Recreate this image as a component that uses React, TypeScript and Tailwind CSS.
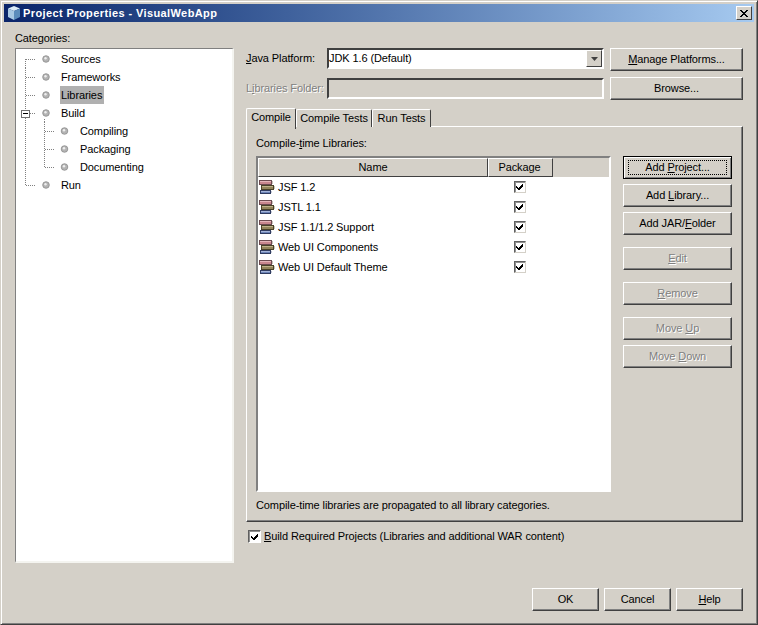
const FONT = "font-['Liberation_Sans','DejaVu_Sans',sans-serif]";

function Btn({ children, w = "w-[109px]", disabled = false, focus = false, className = "" }: { children: React.ReactNode; w?: string; disabled?: boolean; focus?: boolean; className?: string }) {
  const edge = focus
    ? "border-black shadow-[inset_1px_1px_0_#fff,inset_-1px_-1px_0_#808080]"
    : "border-t-white border-l-white border-r-[#404040] border-b-[#404040] shadow-[inset_-1px_-1px_0_#808080]";
  return (
    <div
      className={`${w} h-[23px] shrink-0 flex items-center justify-center bg-[#d4d0c8] border ${edge} ${disabled ? "text-[#808080] [text-shadow:1px_1px_0_#fff]" : "text-black"} ${className}`}
    >
      {focus ? (
        <span className="w-[99px] h-[15px] flex items-center justify-center border border-dotted border-black">{children}</span>
      ) : (
        children
      )}
    </div>
  );
}

function Row({ label, level = 0, last = false, expander = false, selected = false, firstRow = false, lastChild = false }: { label: string; level?: number; last?: boolean; expander?: boolean; selected?: boolean; firstRow?: boolean; lastChild?: boolean }) {
  return (
    <div className="flex h-[18px] items-center">
      <svg width={level ? 62 : 43} height={18} className="shrink-0" shapeRendering="crispEdges">
        <line x1="8.5" y1={firstRow ? 9 : 0} x2="8.5" y2={last ? 9 : 18} stroke="#808080" strokeDasharray="1 1" />
        {level === 0 && !expander && <line x1="9" y1="9.5" x2="19" y2="9.5" stroke="#808080" strokeDasharray="1 1" />}
        {level === 1 && (
          <>
            <line x1="27.5" y1="0" x2="27.5" y2={lastChild ? 9 : 18} stroke="#808080" strokeDasharray="1 1" />
            <line x1="28" y1="9.5" x2="37" y2="9.5" stroke="#808080" strokeDasharray="1 1" />
          </>
        )}
        {expander && (
          <>
            <line x1="13" y1="9.5" x2="19" y2="9.5" stroke="#808080" strokeDasharray="1 1" />
            <line x1="27.5" y1="15" x2="27.5" y2="18" stroke="#808080" strokeDasharray="1 1" />
            <rect x="4.5" y="6.5" width="8" height="7" fill="#fff" stroke="#707070" />
            <line x1="6" y1="9.5" x2="11" y2="9.5" stroke="#000" />
          </>
        )}
        <g shapeRendering="auto">
          <circle cx={level ? 47.5 : 29} cy="9" r="3.3" fill="#b4b4b4" stroke="#8c8c8c" strokeWidth="0.8" />
          <circle cx={level ? 47 : 28.5} cy="8.2" r="1.2" fill="#eeeeee" />
        </g>
      </svg>
      <span className={`pl-[1px] pr-[2px] h-[18px] flex items-center text-black ${selected ? "bg-[#b0b0b0]" : ""}`}>{label}</span>
    </div>
  );
}

function Books() {
  return (
    <svg width="16" height="16" viewBox="0 0 16 16" className="shrink-0" shapeRendering="crispEdges">
      <rect x="0" y="1" width="13" height="5" fill="#6c4a50" />
      <rect x="1" y="2" width="11" height="3" fill="#c8868e" />
      <rect x="1" y="2" width="11" height="1" fill="#e4b4b8" />
      <rect x="13" y="2" width="1" height="3" fill="#c8c0b8" />
      <rect x="2" y="6" width="13" height="5" fill="#4a4228" />
      <rect x="3" y="7" width="11" height="3" fill="#92845a" />
      <rect x="3" y="7" width="11" height="1" fill="#bcb088" />
      <rect x="15" y="7" width="1" height="3" fill="#c8c8b8" />
      <rect x="1" y="11" width="11" height="4" fill="#303c60" />
      <rect x="2" y="12" width="9" height="2" fill="#6c84b8" />
      <rect x="2" y="12" width="9" height="1" fill="#a4b4d8" />
      <rect x="12" y="12" width="1" height="2" fill="#c8ccd8" />
    </svg>
  );
}

function Check({ large = false }: { large?: boolean }) {
  return (
    <div className={`${large ? "w-[13px] h-[13px] border-r-white border-b-white" : "w-[12px] h-[12px] border-r-[#d4d0c8] border-b-[#d4d0c8]"} shrink-0 bg-white border border-t-[#606060] border-l-[#606060] shadow-[inset_1px_1px_0_#909090] flex items-center justify-center`}>
      <svg width="8" height="8" viewBox="0 0 8 8" shapeRendering="crispEdges">
        <path d="M0 3h1v1h1v1h1V4h1V3h1V2h1V1h1v2H7v1H6v1H5v1H4v1H3V7H2V6H1V5H0z" fill="#000" />
      </svg>
    </div>
  );
}

const libs = ["JSF 1.2", "JSTL 1.1", "JSF 1.1/1.2 Support", "Web UI Components", "Web UI Default Theme"];

export default function App() {
  return (
    <div className={`${FONT} w-[758px] h-[625px] text-[11px] leading-[13px] tracking-[-0.1px] bg-[#d4d0c8] border border-t-[#d4d0c8] border-l-[#d4d0c8] border-r-[#404040] border-b-[#404040] shadow-[inset_1px_1px_0_#fff,inset_-1px_-1px_0_#808080] p-[3px] flex flex-col overflow-hidden`}>
      {/* title */}
      <div className="h-[18px] shrink-0 flex items-center bg-gradient-to-r from-[#0a246a] to-[#a6caf0] pl-[3px] pr-[2px]">
        <svg width="14" height="16" viewBox="0 0 14 16" className="shrink-0">
          <path d="M7 1 13 3.5 7 6 1 3.5Z" fill="#dcecf8" />
          <path d="M1 3.5 7 6V15L1 12Z" fill="#a8c8e4" />
          <path d="M13 3.5 7 6V15L13 12Z" fill="#5c8cbc" />
        </svg>
        <span className="ml-[2px] text-white font-bold tracking-[0.4px]">Project Properties - VisualWebApp</span>
        <div className="ml-auto w-[16px] h-[14px] bg-[#d4d0c8] border border-t-white border-l-white border-r-[#404040] border-b-[#404040] flex items-center justify-center">
          <svg width="8" height="7" viewBox="0 0 8 7" shapeRendering="crispEdges">
            <path d="M0 0h2v1h1v1h2V1h1V0h2v1H7v1H6v1H5v1h1v1h1v1h1v1H6V6H5V5H3v1H2v1H0V6h1V5h1V4h1V3H2V2H1V1H0z" fill="#000" />
          </svg>
        </div>
      </div>

      {/* body */}
      <div className="flex px-[11px] pt-[10px] gap-[12px]">
        <div className="w-[219px] shrink-0 flex flex-col">
          <div className="h-[13px] mb-[3px] text-black">Categories:</div>
          <div className="h-[515px] bg-white border-2 border-t-[#808080] border-l-[#808080] border-r-[#f4f4f0] border-b-[#f4f4f0] border-t-[1px] border-l-[1px] pt-[1px] pl-[1px]">
            <Row label="Sources" firstRow />
            <Row label="Frameworks" />
            <Row label="Libraries" selected />
            <Row label="Build" expander />
            <Row label="Compiling" level={1} />
            <Row label="Packaging" level={1} />
            <Row label="Documenting" level={1} lastChild />
            <Row label="Run" last />
          </div>
        </div>

        <div className="w-[497px] shrink-0 pt-[16px]">
          <div className="flex">
            <div className="w-[81px] shrink-0 h-[21px] flex items-center text-black"><span className="whitespace-nowrap"><u>J</u>ava Platform:</span></div>
            <div className="w-[277px] h-[21px] shrink-0 bg-white border-2 border-t-[#404040] border-l-[#404040] border-r-white border-b-white flex items-center">
              <span className="text-black">JDK 1.6 (Default)</span>
              <div className="ml-auto w-[16px] h-[17px] bg-[#d4d0c8] border border-t-white border-l-white border-r-[#404040] border-b-[#404040] flex items-center justify-center">
                <svg width="7" height="4" viewBox="0 0 7 4"><path d="M0 0h7L3.5 4z" fill="#404040" /></svg>
              </div>
            </div>
            <Btn w="w-[133px]" className="ml-[6px]"><span><u>M</u>anage Platforms...</span></Btn>
          </div>
          <div className="flex mt-[6px]">
            <div className="w-[81px] shrink-0 h-[21px] mt-[1px] flex items-center text-[#808080] [text-shadow:1px_1px_0_#fff]"><span className="whitespace-nowrap">L<u>i</u>braries Folder:</span></div>
            <div className="w-[277px] h-[21px] mt-[1px] shrink-0 bg-[#d4d0c8] border-2 border-t-[#404040] border-l-[#404040] border-r-white border-b-white" />
            <Btn w="w-[133px]" className="ml-[6px]">Browse...</Btn>
          </div>

          {/* tabs */}
          <div className="flex items-end h-[20px] mt-[7px] relative z-10">
            <div className="w-[50px] h-[21px] -mb-[2px] bg-[#d4d0c8] border border-b-0 border-t-white border-l-white border-r-[#404040] rounded-t-[2px] flex items-start justify-center pt-[2px] text-black">Compile</div>
            <div className="w-[76px] h-[18px] bg-[#d4d0c8] border border-b-0 border-t-white border-l-white border-r-[#404040] rounded-t-[2px] flex items-center justify-center text-black">Compile Tests</div>
            <div className="w-[59px] h-[18px] bg-[#d4d0c8] border border-b-0 border-t-white border-l-white border-r-[#404040] rounded-t-[2px] flex items-center justify-center text-black">Run Tests</div>
          </div>
          <div className="h-[396px] -mt-[1px] border border-t-white border-l-white border-r-[#404040] border-b-[#404040] shadow-[inset_-1px_-1px_0_#808080] pl-[9px] pt-[10px]">
            <div className="h-[13px] text-black">Compile-<u>t</u>ime Libraries:</div>
            <div className="flex gap-[12px] mt-[6px]">
              <div className="w-[355px] h-[336px] shrink-0 border-2 border-t-[#808080] border-l-[#808080] border-r-white border-b-white bg-white flex flex-col">
                <div className="h-[19px] shrink-0 flex bg-[#d4d0c8]">
                  <div className="w-[230px] border border-t-white border-l-white border-r-[#404040] border-b-[#404040] flex items-center justify-center text-black">Name</div>
                  <div className="w-[65px] border border-t-white border-l-white border-r-[#404040] border-b-[#404040] flex items-center justify-center text-black pr-[2px]">Package</div>
                </div>
                {libs.map((l) => (
                  <div key={l} className="h-[20px] shrink-0 flex items-center pl-[1px]">
                    <Books />
                    <span className="ml-[3px] w-[220px] text-black">{l}</span>
                    <div className="ml-[16px]"><Check /></div>
                  </div>
                ))}
              </div>
              <div className="flex flex-col">
                <Btn focus><span>Add <u>P</u>roject...</span></Btn>
                <Btn className="mt-[5px]"><span>Add <u>L</u>ibrary...</span></Btn>
                <Btn className="mt-[5px]"><span>Add JAR/<u>F</u>older</span></Btn>
                <Btn disabled className="mt-[12px]"><span><u>E</u>dit</span></Btn>
                <Btn disabled className="mt-[12px]"><span><u>R</u>emove</span></Btn>
                <Btn disabled className="mt-[12px]"><span>Move <u>U</u>p</span></Btn>
                <Btn disabled className="mt-[5px]"><span>Move <u>D</u>own</span></Btn>
              </div>
            </div>
            <div className="mt-[7px] h-[13px] text-black">Compile-time libraries are propagated to all library categories.</div>
          </div>
          <div className="flex items-center mt-[8px] ml-[2px] h-[13px]">
            <Check large />
            <span className="ml-[3px] text-black"><u>B</u>uild Required Projects (Libraries and additional WAR content)</span>
          </div>
        </div>
      </div>

      {/* footer */}
      <div className="flex justify-end gap-[5px] pr-[11px] mt-[25px]">
        <Btn w="w-[67px]">OK</Btn>
        <Btn w="w-[67px]">Cancel</Btn>
        <Btn w="w-[67px]"><span><u>H</u>elp</span></Btn>
      </div>
    </div>
  );
}
